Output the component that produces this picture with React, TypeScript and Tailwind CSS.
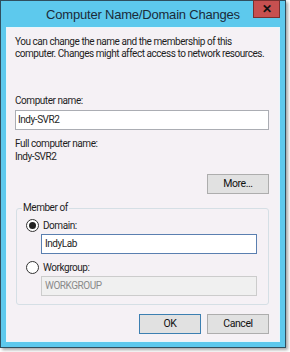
import * as React from 'react'

function Radio({ checked }: { checked?: boolean }) {
  return (
    <span className="flex h-[13px] w-[13px] items-center justify-center rounded-full border border-[#333333] bg-white">
      {checked ? <span className="h-[7px] w-[7px] rounded-full bg-[#222222]" /> : null}
    </span>
  )
}

function Button({ children, primary }: { children: React.ReactNode; primary?: boolean }) {
  return (
    <button
      className={
        primary
          ? 'flex h-[20px] w-[62px] items-center justify-center border border-[#3c7fb1] bg-[#e1e1e1] text-[10.5px] text-[#111]'
          : 'flex h-[20px] w-[62px] items-center justify-center border border-[#adadad] bg-[#e1e1e1] text-[10.5px] text-[#111]'
      }
    >
      {children}
    </button>
  )
}

export default function App() {
  return (
    <div className="h-[352px] w-[290px] whitespace-nowrap bg-white font-['Roboto',sans-serif] text-[10px] leading-[12px] tracking-[-0.45px] text-[#1e1e1e]">
      <div className="flex h-[348px] w-[286px] flex-col border border-[#2f4f5f] bg-[#5dc9ed] shadow-[2px_2px_3px_rgba(0,0,0,0.35)]">
        <div className="relative flex h-[26px] items-center justify-center">
          <span className="mt-[1px] font-['Liberation_Sans',Arial,sans-serif] text-[13px] tracking-[-0.2px] text-[#1b2b3a]">
            Computer Name/Domain Changes
          </span>
          <div className="absolute right-[5px] top-[-1px] flex h-[18px] w-[27px] items-center justify-center border border-[#7a2f2f] bg-[#c75050] text-[12px] font-bold leading-none text-[#111]">
            ✕
          </div>
        </div>
        <div className="mb-[5px] ml-[5px] mr-[5px] flex flex-1 flex-col border border-[#eaf6fb] bg-[#f5f1f5] px-[8px]">
          <p className="mt-[8px]">
            You can change the name and the membership of this
            <br />
            computer. Changes might affect access to network resources.
          </p>
          <div className="mt-[35px]">Computer name:</div>
          <div className="mt-[3px] flex h-[20px] w-[254px] items-center border border-[#abadb3] bg-white px-[2px]">
            Indy-SVR2
          </div>
          <div className="mt-[8px]">Full computer name:</div>
          <div className="mt-[1px]">Indy-SVR2</div>
          <div className="mt-[11px] flex w-[254px] justify-end">
            <Button>More...</Button>
          </div>
          <div className="relative ml-[1px] mt-[14px] h-[97px] w-[253px] rounded-[3px] border border-[#d5dfe5] px-[9px]">
            <span className="absolute left-[5px] top-[-7px] bg-[#f5f1f5] px-[1px]">Member of</span>
            <div className="mt-[10px] flex items-center gap-[4px]">
              <Radio checked />
              <span>Domain:</span>
            </div>
            <div className="ml-[15px] mt-[2px] flex h-[20px] w-[216px] items-center border border-[#5a7fb0] bg-white px-[3px]">
              IndyLab
            </div>
            <div className="mt-[7px] flex items-center gap-[4px]">
              <Radio />
              <span>Workgroup:</span>
            </div>
            <div className="ml-[15px] mt-[2px] flex h-[20px] w-[216px] items-center border border-[#cccccc] bg-[#f0f0f0] px-[3px] text-[#8a8a8a]">
              WORKGROUP
            </div>
          </div>
          <div className="mt-[9px] flex w-[254px] justify-end gap-[6px]">
            <Button primary>OK</Button>
            <Button>Cancel</Button>
          </div>
        </div>
      </div>
    </div>
  )
}
